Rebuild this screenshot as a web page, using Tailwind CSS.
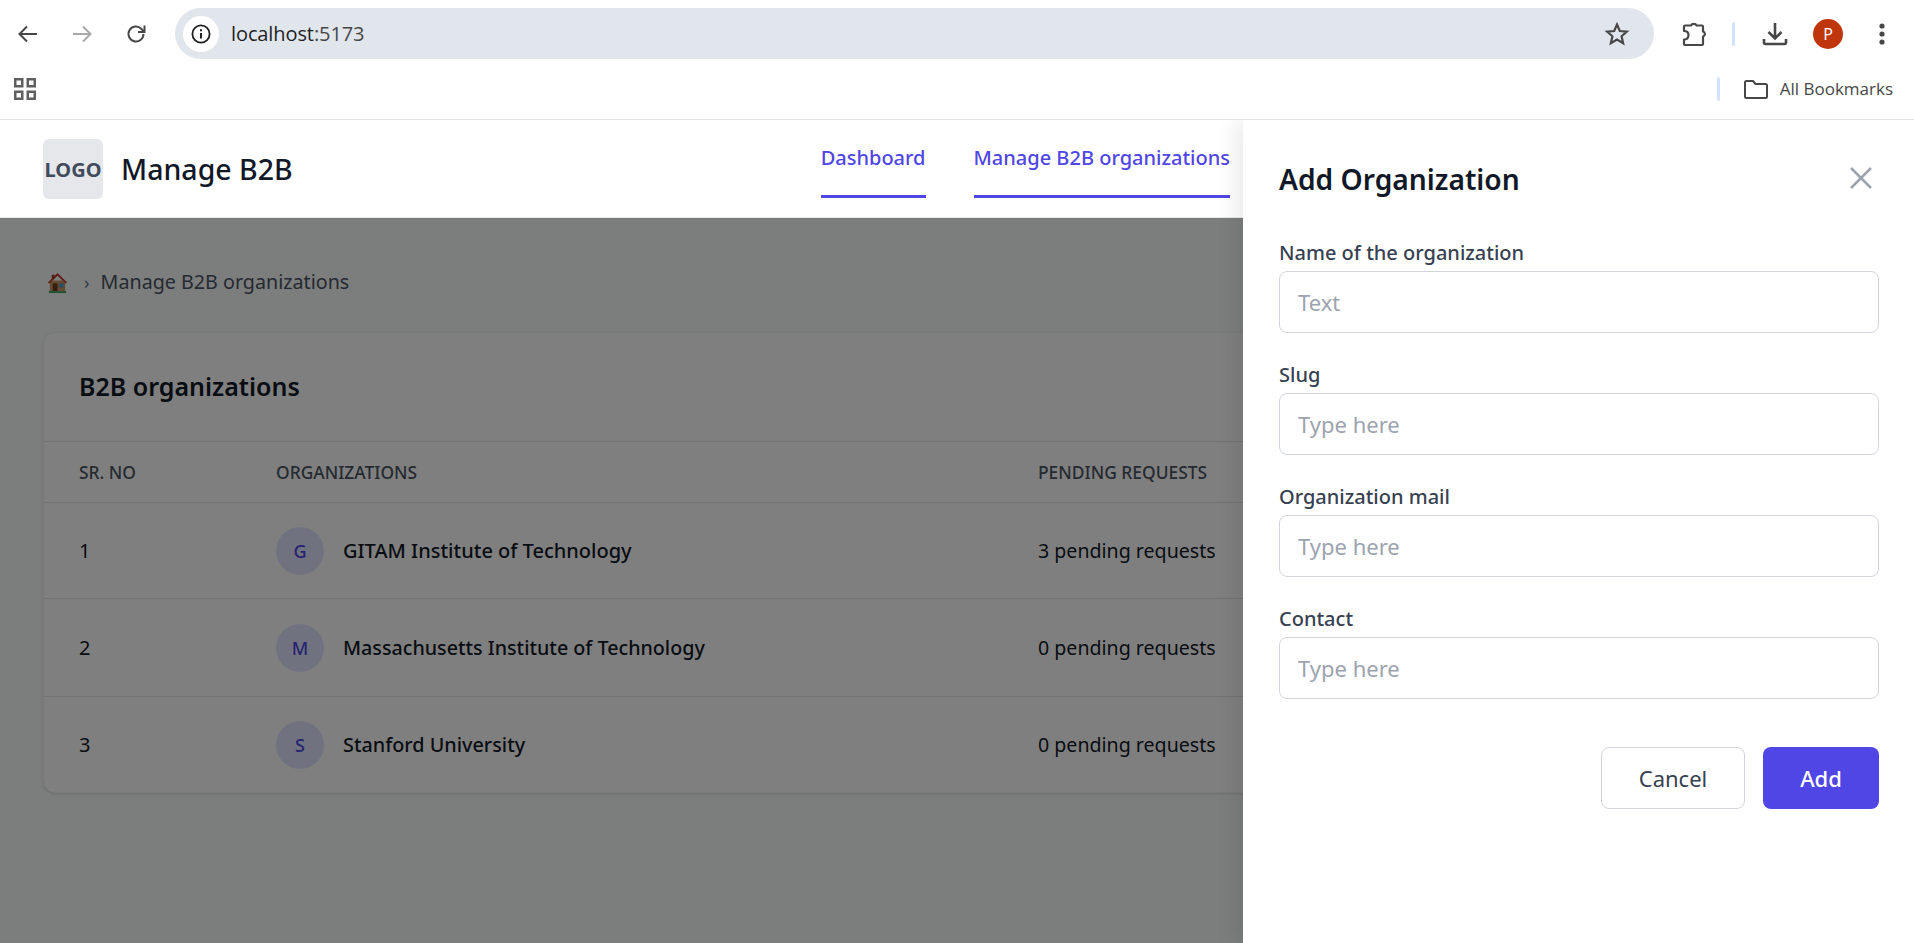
<!doctype html>
<html>
<head>
<meta charset="utf-8">
<script src="https://cdn.jsdelivr.net/npm/@tailwindcss/browser@4"></script>
<title>Manage B2B</title>
</head>
<body class="bg-white font-['Noto_Sans',sans-serif]">
<div class="relative w-[1914px] h-[943px] overflow-hidden flex flex-col bg-[#f9fafb]">
  <!-- Browser chrome -->
  <div class="h-[120px] shrink-0 bg-white border-b border-[#e3e3e3] flex flex-col">
    <div class="h-[68px] shrink-0 flex items-center pl-[16px]">
      <svg class="w-[24px] h-[24px] text-[#474747]" viewBox="0 0 24 24" fill="none" stroke="currentColor" stroke-width="2"><path d="M21 12H4M11 4.500 3.500 12l7.500 7.500"/></svg>
      <svg class="w-[24px] h-[24px] ml-[30px] text-[#a9a9a9]" viewBox="0 0 24 24" fill="none" stroke="currentColor" stroke-width="2"><path d="M3 12h17M13 4.500l7.500 7.500-7.500 7.500"/></svg>
      <svg class="w-[24px] h-[24px] ml-[30px] text-[#474747]" viewBox="0 0 24 24" fill="none" stroke="currentColor" stroke-width="2"><path d="M19.500 12a7.500 7.500 0 1 1-2.200-5.300L20 9.500"/><path d="M20.500 3.500v6.500H14"/></svg>
      <div class="ml-[27px] -mt-[1px] w-[1479px] h-[51px] rounded-full bg-[#e1e6ed] flex items-center pl-[8px] pr-[24px]">
        <div class="w-[36px] h-[36px] rounded-full bg-white flex items-center justify-center">
          <svg class="w-[20px] h-[20px] text-[#1f1f1f]" viewBox="0 0 20 20" fill="none" stroke="currentColor" stroke-width="1.800"><circle cx="10" cy="10" r="8.600"/><path d="M10 9v5.500M10 5.200v2" stroke-width="2"/></svg>
        </div>
        <span class="ml-[12px] text-[20px] text-[#1f1f1f] font-['Open_Sans',sans-serif] tracking-[-0.1px]">localhost<span class="text-[#474747]">:5173</span></span>
        <svg class="ml-auto w-[26px] h-[26px] text-[#474747]" viewBox="0 0 24 24" fill="none" stroke="currentColor" stroke-width="2"><path d="M12 3.200l2.600 6 6.500.6-4.900 4.300 1.500 6.400L12 17.100l-5.700 3.400 1.500-6.400-4.900-4.300 6.500-.6z"/></svg>
      </div>
      <svg class="ml-[27px] w-[26px] h-[26px] text-[#474747]" viewBox="0 0 26 26" fill="none" stroke="currentColor" stroke-width="2.200" stroke-linejoin="round"><path d="M3 5.500a1 1 0 0 1 1-1h6a3 2.500 0 0 1 5.600 0H21a1 1 0 0 1 1 1V10.500a2.600 2.600 0 0 1 0 5V23a1 1 0 0 1-1 1H4a1 1 0 0 1-1-1V18.500c3 0 4.500-2 4.500-4.500S6 10 3 10z"/></svg>
      <div class="ml-[25px] w-[3px] h-[24px] rounded bg-[#d3e3fd]"></div>
      <svg class="ml-[27px] w-[26px] h-[26px] text-[#474747]" viewBox="0 0 26 26" fill="none" stroke="currentColor" stroke-width="2.600"><path d="M13 2v15M6.500 11l6.500 6.500 6.500-6.500"/><path d="M2 18v3.500a1.500 1.500 0 0 0 1.500 1.500h19a1.500 1.500 0 0 0 1.500-1.500V18"/></svg>
      <div class="ml-[25px] w-[30px] h-[30px] rounded-full bg-[#bf360c] flex items-center justify-center text-white text-[16px]">P</div>
      <svg class="ml-[36px] w-[6px] h-[24px] text-[#474747]" viewBox="0 0 6 24" fill="currentColor"><circle cx="3" cy="4" r="2.600"/><circle cx="3" cy="12" r="2.600"/><circle cx="3" cy="20" r="2.600"/></svg>
    </div>
    <div class="flex-1 flex items-center pl-[14px] pr-[21px] pb-[9px]">
      <svg class="w-[22px] h-[22px] text-[#5f5f5f]" viewBox="0 0 22 22" fill="none" stroke="currentColor" stroke-width="2.500"><rect x="1.250" y="1.250" width="7" height="7"/><rect x="13.750" y="1.250" width="7" height="7"/><rect x="1.250" y="13.750" width="7" height="7"/><rect x="13.750" y="13.750" width="7" height="7"/></svg>
      <div class="ml-auto w-[3px] h-[24px] rounded bg-[#d3e3fd]"></div>
      <svg class="ml-[24px] w-[24px] h-[19px] text-[#474747]" viewBox="0 0 24 19" fill="none" stroke="currentColor" stroke-width="2" stroke-linejoin="round"><path d="M1 2.500A1.500 1.500 0 0 1 2.500 1h6.500l2.500 3h10A1.500 1.500 0 0 1 23 5.500v11a1.500 1.500 0 0 1-1.500 1.500h-19A1.500 1.500 0 0 1 1 16.500z"/></svg>
      <span class="ml-[12px] text-[17px] text-[#474747] font-['Open_Sans',sans-serif]">All Bookmarks</span>
    </div>
  </div>

  <!-- App header -->
  <header class="h-[98px] shrink-0 bg-white border-b border-[#e5e7eb] flex items-center pl-[43px]">
    <div class="w-[60px] h-[60px] pt-[2px] rounded-md bg-[#e5e7eb] flex items-center justify-center text-[20px] font-bold text-[#414b5c]">LOGO</div>
    <h1 class="ml-[18px] pt-[2px] text-[28.500px] font-medium text-[#111827]">Manage B2B</h1>
    <nav class="ml-[528px] flex gap-[48px] self-start">
      <a class="h-[78px] flex items-center border-b-[3px] border-[#4f46e5] text-[20px] font-medium text-[#4f46e5]">Dashboard</a>
      <a class="h-[78px] flex items-center border-b-[3px] border-[#4f46e5] text-[20px] font-medium text-[#4f46e5]">Manage B2B organizations</a>
    </nav>
  </header>

  <!-- Page content -->
  <main class="flex-1 px-[43px]">
    <div class="h-[34px] mt-[47px] mb-[33px] flex items-center">
      <svg class="ml-[3px] w-[23px] h-[23px]" viewBox="0 0 24 24"><rect x="4" y="10" width="16" height="11" fill="#c99560"/><path d="M2 12 12 2l10 10-1.500 1L12 5l-8.500 8z" fill="#c0392b"/><path d="M6 4h3v3l-3 3z" fill="#a5392b"/><rect x="7" y="13" width="5" height="8" fill="#6b3f22"/><rect x="14" y="13" width="4" height="4" fill="#3b9ddd"/><rect x="3" y="21" width="18" height="2" fill="#3ca55c"/></svg>
      <span class="ml-[15px] text-[18px] text-[#6b7280]">›</span>
      <span class="ml-[11px] text-[19.700px] text-[#4b5563]">Manage B2B organizations</span>
    </div>
    <section class="w-[1828px] h-[461px] rounded-xl bg-white border border-[#f3f4f6] shadow-sm">
      <h2 class="h-[109px] flex items-center pl-[35px] border-b border-[#e5e7eb] text-[25px] font-semibold text-[#111827]">B2B organizations</h2>
      <div class="h-[61px] grid grid-cols-[197px_762px_1fr] items-center pl-[35px] border-b border-[#e5e7eb] text-[17.400px] font-medium text-[#4b5563] uppercase">
        <div>Sr. No</div><div>Organizations</div><div>Pending requests</div>
      </div>
      <div class="h-[96px] grid grid-cols-[197px_762px_1fr] items-center pl-[35px] pt-[1px] border-b border-[#e5e7eb] text-[20px] text-[#111827]">
        <div>1</div>
        <div class="flex items-center gap-[19px]"><div class="w-[48px] h-[48px] rounded-full bg-[#e0e7ff] flex items-center justify-center text-[18px] font-medium text-[#4f46e5]">G</div><span class="font-medium">GITAM Institute of Technology</span></div>
        <div class="text-[19.600px]">3 pending requests</div>
      </div>
      <div class="h-[98px] grid grid-cols-[197px_762px_1fr] items-center pl-[35px] pt-[1px] border-b border-[#e5e7eb] text-[20px] text-[#111827]">
        <div>2</div>
        <div class="flex items-center gap-[19px]"><div class="w-[48px] h-[48px] rounded-full bg-[#e0e7ff] flex items-center justify-center text-[18px] font-medium text-[#4f46e5]">M</div><span class="font-medium text-[19.700px]">Massachusetts Institute of Technology</span></div>
        <div class="text-[19.600px]">0 pending requests</div>
      </div>
      <div class="h-[95px] grid grid-cols-[197px_762px_1fr] items-center pl-[35px] pt-[1px] text-[20px] text-[#111827]">
        <div>3</div>
        <div class="flex items-center gap-[19px]"><div class="w-[48px] h-[48px] rounded-full bg-[#e0e7ff] flex items-center justify-center text-[18px] font-medium text-[#4f46e5]">S</div><span class="font-medium text-[19.800px]">Stanford University</span></div>
        <div class="text-[19.600px]">0 pending requests</div>
      </div>
    </section>
  </main>

  <!-- Overlay layer, clipped to the page below the browser chrome -->
  <div class="absolute left-0 right-0 top-[120px] bottom-0 overflow-hidden">
    <div class="absolute left-0 right-0 top-[98px] bottom-0 bg-black/50"></div>
    <aside class="absolute left-[1243px] right-0 top-0 bottom-0 bg-white shadow-[-8px_0_20px_rgba(0,0,0,0.08)] pl-[36px] pr-[35px] flex flex-col">
      <div class="h-[119px] shrink-0 flex items-center justify-between">
        <h2 class="text-[28.200px] font-semibold text-[#111827]">Add Organization</h2>
        <svg class="w-[24px] h-[24px] text-[#9ca3af] mr-[6px] -mt-[3px]" viewBox="0 0 24 24" fill="none" stroke="currentColor" stroke-width="2.500"><path d="M2 2l20 20M22 2 2 22"/></svg>
      </div>
      <div class="flex flex-col gap-[28px]">
        <label class="flex flex-col gap-[5px]"><span class="h-[27px] leading-[27px] text-[20px] font-medium text-[#374151]">Name of the organization</span><input class="h-[62px] px-[18px] rounded-lg border border-[#d1d5db] text-[22px] placeholder:text-[#9ca3af]" placeholder="Text"></label>
        <label class="flex flex-col gap-[5px]"><span class="h-[27px] leading-[27px] text-[20px] font-medium text-[#374151]">Slug</span><input class="h-[62px] px-[18px] rounded-lg border border-[#d1d5db] text-[22px] placeholder:text-[#9ca3af]" placeholder="Type here"></label>
        <label class="flex flex-col gap-[5px]"><span class="h-[27px] leading-[27px] text-[20px] font-medium text-[#374151]">Organization mail</span><input class="h-[62px] px-[18px] rounded-lg border border-[#d1d5db] text-[22px] placeholder:text-[#9ca3af]" placeholder="Type here"></label>
        <label class="flex flex-col gap-[5px]"><span class="h-[27px] leading-[27px] text-[20px] font-medium text-[#374151]">Contact</span><input class="h-[62px] px-[18px] rounded-lg border border-[#d1d5db] text-[22px] placeholder:text-[#9ca3af]" placeholder="Type here"></label>
      </div>
      <div class="mt-[48px] flex justify-end gap-[18px]">
        <button class="w-[144px] h-[62px] rounded-lg border border-[#d1d5db] bg-white text-[22px] text-[#374151]">Cancel</button>
        <button class="w-[116px] h-[62px] rounded-lg bg-[#4f46e5] text-[22px] font-medium text-white">Add</button>
      </div>
    </aside>
  </div>
</div>
</body>
</html>
